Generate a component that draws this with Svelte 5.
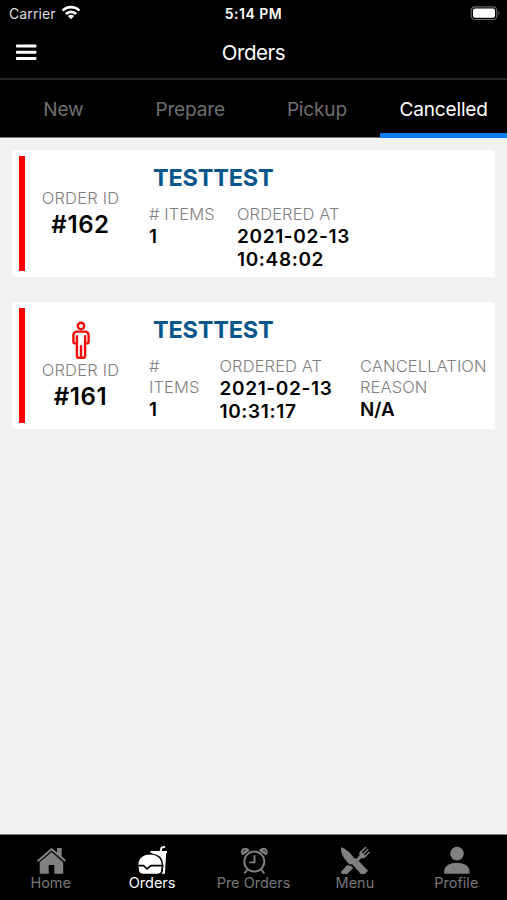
<script>
  const tabs = ['New', 'Prepare', 'Pickup', 'Cancelled'];
  const orders = [
    { id: '#162', person: false, items: '1', date: '2021-02-13', time: '10:48:02', reason: '' },
    { id: '#161', person: true, items: '1', date: '2021-02-13', time: '10:31:17', reason: 'N/A' }
  ];
  const nav = ['Home', 'Orders', 'Pre Orders', 'Menu', 'Profile'];
</script>

<div class="app">
  <header>
    <div class="status">
      <div class="carrier">
        <span>Carrier</span>
        <svg width="20" height="15" viewBox="0 0 20 15" fill="none" stroke="#fff" stroke-width="2.6">
          <path d="M1.6 5.6C6.2 .9 13.8 .9 18.4 5.6" />
          <path d="M4.8 9C7.7 6.1 12.3 6.1 15.2 9" />
          <path d="M6.9 11.1Q10 8.6 13.1 11.1L10 14.3Z" fill="#fff" stroke="none" />
        </svg>
      </div>
      <b class="clock">5:14 PM</b>
      <div class="power">
        <svg width="31" height="15" viewBox="0 0 31 15">
          <rect x="1.2" y=".9" width="25.6" height="12.6" rx="3.6" fill="none" stroke="#666" stroke-width="1.2" />
          <rect x="3" y="2.6" width="22" height="9.2" rx="2" fill="#fff" />
          <path d="M28.4 5Q30.4 7.2 28.4 9.4Z" fill="#666" />
        </svg>
      </div>
    </div>
    <div class="title">
      <svg width="21" height="17" viewBox="0 0 21 17" fill="#fff">
        <rect y=".4" width="20.4" height="3" rx=".7" />
        <rect y="6.7" width="20.4" height="3" rx=".7" />
        <rect y="12.9" width="20.4" height="3" rx=".7" />
      </svg>
      <h1>Orders</h1>
    </div>
    <nav class="tabs">
      {#each tabs as tab, i}
        <div class="tab" class:active={i === 3}><span>{tab}</span></div>
      {/each}
    </nav>
  </header>

  <main>
    {#each orders as o}
      <article>
        <div class="bar"></div>
        <div class="ident">
          {#if o.person}
            <svg class="person" width="18" height="38" viewBox="0 0 18 38" fill="none" stroke="#f50a0a" stroke-width="2.4" stroke-linejoin="round" stroke-linecap="round">
              <circle cx="9" cy="4.9" r="3.2" />
              <path d="M4.9 22.4H2.8Q1.4 22.4 1.4 20.8V14.5Q1.4 10.6 5.3 10.6H12.7Q16.6 10.6 16.6 14.5V20.8Q16.6 22.4 15.2 22.4H13.1" />
              <path d="M4.9 15.2V35.1Q4.9 36.7 6.4 36.7H11.6Q13.1 36.7 13.1 35.1V15.2M9 25.2V36.4" />
            </svg>
          {/if}
          <span class="label">ORDER ID</span>
          <b class="number">{o.id}</b>
        </div>
        <div class="body">
          <h2>TESTTEST</h2>
          <div class="details">
            <div class="items" class:narrow={o.reason}>
              <span class="label">#{#if o.reason}<br />{:else}&nbsp;{/if}ITEMS</span>
              <b>{o.items}</b>
            </div>
            <div class="ordered">
              <span class="label">ORDERED AT</span>
              <b>{o.date}<br />{o.time}</b>
            </div>
            {#if o.reason}
              <div>
                <span class="label">CANCELLATION<br />REASON</span>
                <b>{o.reason}</b>
              </div>
            {/if}
          </div>
        </div>
      </article>
    {/each}
  </main>

  <footer>
    {#each nav as name, i}
      <div class="item" class:on={i === 1}>
        <svg width="30" height="30" viewBox="0 0 30 30" fill="currentColor">
          {#if i === 0}
            <path d="M.9 15.5L15.6 2.8L21 7.4V3H25.7V11.2L30 15.2L28.7 16.8L15.6 5.5L2.3 17Z" />
            <path d="M3.7 17.2L15.6 7L27.2 17.2V28.8H18.3V20H12.7V28.8H3.7Z" />
          {:else if i === 1}
            <path d="M13.6 6H22.7L23.8 2.1L27.9 .8L28.4 2.4L25.3 3.4L24.6 6H30V8H29.2L27.9 28.8H24.2Q26.4 27.5 26 23.2Q27.3 20.8 25.9 18.6Q25.4 10 15.3 8.6L15 8H13.6Z" />
            <path d="M1.5 19.2C1.5 6.3 24.6 6.3 24.6 19.2L25.2 19.8H13.6L10 22.8L6.9 19.8H.8Z" />
            <path d="M.9 21.4H6.2L10 25L14.2 21.4H25.2L24.3 22.6V24.4Q24.2 28.8 20 28.8H6.3Q2.1 28.8 1.9 24.4V22.6Z" />
          {:else if i === 2}
            <g fill="none" stroke="currentColor" stroke-width="1.9">
              <circle cx="15.3" cy="16.5" r="10" />
              <path d="M15.5 10.2V17.4H10.3" />
              <path d="M8.5 24.5L5.8 27.8M22.1 24.5L24.8 27.8" stroke-linecap="round" />
              <path d="M3.8 9.2C.8 5.1 6 1.8 9.4 5.2ZM26.8 9.2C29.8 5.1 24.6 1.8 21.2 5.2Z" stroke-linejoin="round" />
            </g>
            <path d="M4.5 8L8.3 5.3L7.2 4.8L4 6.5ZM26.1 8L22.3 5.3L23.4 4.8L26.6 6.5Z" />
          {:else if i === 3}
            <g transform="translate(-.8 0)">
              <path d="M2 2.2C5.8 3.1 12.5 8.6 14.8 13.1L17.1 13.7L20.3 10.4C19.7 8.6 20.1 7.5 21.3 6.3L26.2 1.5L27.3 2.5L22.6 7.3L23.7 8.4L28.5 3.6L29.5 4.6L24.8 9.5L25.8 10.5L30 6.2L31 7.3L26.4 12C24.9 13.5 23.7 13.5 22.2 13L19.5 16L28.9 25.8L25.7 29H21.7L13 19.2L10.6 19.5C5.2 14.7 .8 7.9 2 2.2Z" />
              <path d="M8.2 20.1L12.3 21.2L14 22.9L8 29H3.2L1.6 27Z" />
            </g>
          {:else}
            <circle cx="16" cy="8.6" r="6.8" />
            <path d="M3.2 28.8V26C3.2 14.9 28.5 14.9 28.5 26V28.8Z" />
          {/if}
        </svg>
        <span>{name}</span>
      </div>
    {/each}
  </footer>
</div>

<style>
  :global(body) { margin: 0; }
  .app {
    width: 507px;
    height: 900px;
    display: flex;
    flex-direction: column;
    background: #f1f1f1;
    font-family: Inter, "Liberation Sans", sans-serif;
    overflow: hidden;
  }
  header { background: #000; color: #fff; height: 138px; flex: none; }
  .status {
    height: 27px;
    display: grid;
    grid-template-columns: 1fr auto 1fr;
    align-items: center;
    font-size: 14px;
    line-height: 27px;
  }
  .carrier { display: flex; align-items: center; padding-left: 9px; gap: 5px; color: #ddd; letter-spacing: .1px; }
  .carrier svg { margin-bottom: 2px; }
  .clock { font-weight: 600; font-size: 14px; letter-spacing: .5px; }
  .power { display: flex; justify-content: flex-end; padding-right: 6px; }
  .title {
    height: 51px;
    display: grid;
    grid-template-columns: 1fr auto 1fr;
    align-items: center;
    border-bottom: 2px solid #222;
  }
  .title svg { margin-left: 16px; }
  h1 { margin: 0; font-size: 20.5px; font-weight: 400; letter-spacing: -.45px; }
  .tabs { display: flex; height: 58px; }
  .tab {
    flex: 1;
    display: flex;
    align-items: center;
    justify-content: center;
    font-size: 19px;
    letter-spacing: -.15px;
    color: #6f6f6f;
    border-bottom: 1px solid #777;
    box-sizing: border-box;
    padding-top: 2px;
  }
  .tab.active { color: #fff; border-bottom: 5px solid #087cf0; padding-top: 6px; }
  main { flex: 1; display: flex; flex-direction: column; gap: 25px; padding: 12px 12px 0; }
  article {
    height: 127px;
    box-sizing: border-box;
    padding: 6px 7px;
    display: flex;
    background: #fff;
    border-radius: 3px;
  }
  .bar { width: 6px; background: #fa0000; flex: none; }
  .ident {
    width: 111px;
    flex: none;
    display: flex;
    flex-direction: column;
    align-items: center;
    justify-content: center;
    padding-top: 1px;
    box-sizing: border-box;
  }
  .ident .label { letter-spacing: .2px; }
  .person { margin-bottom: 1px; }
  .label { font-size: 16.5px; line-height: 21px; color: #808080; font-weight: 300; letter-spacing: .1px; white-space: nowrap; }
  .number { font-size: 24px; line-height: 31px; font-weight: 600; letter-spacing: .6px; }
  .body { padding-left: 13px; }
  h2 { margin: 7px 0 0 4px; font-size: 23.5px; line-height: 30px; font-weight: 700; letter-spacing: -.2px; color: #07578c; }
  .details { display: flex; padding-top: 11px; }
  .details > div { display: flex; flex-direction: column; }
  .details b { font-size: 18.8px; line-height: 23px; font-weight: 600; white-space: nowrap; }
  .items { width: 88px; }
  .items.narrow { width: 70.5px; }
  .ordered { width: 140.5px; }
  .details .ordered b { font-size: 19px; letter-spacing: .65px; }
  footer {
    height: 66px;
    box-sizing: border-box;
    flex: none;
    display: flex;
    background: #000;
    border-top: 1px solid #777;
    padding-top: 10px;
  }
  .item {
    flex: 1;
    display: flex;
    flex-direction: column;
    align-items: center;
    color: #808080;
    font-size: 14.5px;
    line-height: 17px;
  }
  .item svg { flex: none; overflow: visible; }
  .item span { margin-top: -1px; color: #777; }
  .item.on, .item.on span { color: #fff; }
</style>
